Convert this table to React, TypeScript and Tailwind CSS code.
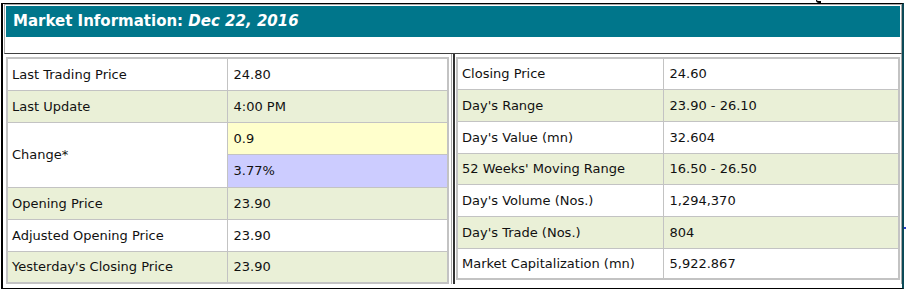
const leftRows = [
  { label: 'Last Trading Price', value: '24.80', bg: 'bg-white' },
  { label: 'Last Update', value: '4:00 PM', bg: 'bg-[#eaf0d7]' },
]

const leftRowsBottom = [
  { label: 'Opening Price', value: '23.90', bg: 'bg-[#eaf0d7]' },
  { label: 'Adjusted Opening Price', value: '23.90', bg: 'bg-white' },
  { label: "Yesterday's Closing Price", value: '23.90', bg: 'bg-[#eaf0d7]' },
]

const rightRows = [
  { label: 'Closing Price', value: '24.60', bg: 'bg-white', h: 'h-[31px]' },
  { label: "Day's Range", value: '23.90 - 26.10', bg: 'bg-[#eaf0d7]', h: 'h-[32px]' },
  { label: "Day's Value (mn)", value: '32.604', bg: 'bg-white', h: 'h-[32px]' },
  { label: "52 Weeks' Moving Range", value: '16.50 - 26.50', bg: 'bg-[#eaf0d7]', h: 'h-[31px]' },
  { label: "Day's Volume (Nos.)", value: '1,294,370', bg: 'bg-white', h: 'h-[32px]' },
  { label: "Day's Trade (Nos.)", value: '804', bg: 'bg-[#eaf0d7]', h: 'h-[32px]' },
  { label: 'Market Capitalization (mn)', value: '5,922.867', bg: 'bg-white', h: 'h-[31px]' },
]

const cell = 'border border-[#c3c3c3] align-middle'

export default function App() {
  return (
    <div className="relative h-[294px] w-[908px] overflow-hidden bg-white font-['DejaVu_Sans',sans-serif] text-[13px] leading-none text-[#111]">
      {/* clipped descender of text above the frame */}
      <span className="absolute left-[816px] top-0 h-[3px] w-[5px] rounded-bl-full border-b-2 border-l border-black" />
      <span className="absolute left-[904px] top-[227px] h-[2px] w-[2px] bg-[#2a3bd0]" />

      <div className="ml-[1px] mt-[3px] h-[286px] w-[903px] border-y border-l-2 border-r-2 border-black border-r-[#0b4a57]">
        {/* header */}
        <div className="ml-[1px] border border-[#a8a8a8] border-b-[#404040] p-[1px]">
          <div className="flex h-[31px] items-center bg-[#00768b] pl-[7px] text-[15px] font-bold text-white">
            Market Information:&nbsp;<i>Dec 22, 2016</i>
          </div>
          <div className="h-[15px] bg-white" />
        </div>

        <div className="flex">
          {/* left panel */}
          <div className="w-[449px] border-r border-[#a8a8a8] pl-[3px] pt-[3px]">
            <table className="w-[443px] border-collapse border-2 border-[#c3c3c3]">
              <tbody>
                {leftRows.map((r) => (
                  <tr key={r.label} className={`h-[32px] ${r.bg}`}>
                    <td className={`${cell} w-[220px] pl-[4px]`}>{r.label}</td>
                    <td className={`${cell} pl-[6px]`}>{r.value}</td>
                  </tr>
                ))}
                <tr className="h-[32px]">
                  <td rowSpan={2} className={`${cell} bg-white pl-[4px]`}>
                    Change*
                  </td>
                  <td className={`${cell} bg-[#ffffcc] pl-[6px]`}>0.9</td>
                </tr>
                <tr className="h-[33px]">
                  <td className={`${cell} bg-[#ccccff] pl-[6px]`}>3.77%</td>
                </tr>
                {leftRowsBottom.map((r) => (
                  <tr key={r.label} className={`h-[32px] ${r.bg}`}>
                    <td className={`${cell} pl-[4px]`}>{r.label}</td>
                    <td className={`${cell} pl-[6px]`}>{r.value}</td>
                  </tr>
                ))}
              </tbody>
            </table>
          </div>

          <div className="ml-[1px] w-[2px] bg-[#303030]" />

          {/* right panel */}
          <div className="w-[447px] border-r border-[#a8a8a8] pl-[1px] pt-[3px]">
            <table className="w-[444px] border-collapse border-2 border-[#c3c3c3]">
              <tbody>
                {rightRows.map((r) => (
                  <tr key={r.label} className={`${r.h} ${r.bg}`}>
                    <td className={`${cell} w-[206px] pl-[4px]`}>{r.label}</td>
                    <td className={`${cell} pl-[6px]`}>{r.value}</td>
                  </tr>
                ))}
              </tbody>
            </table>
          </div>
        </div>
      </div>
    </div>
  )
}
